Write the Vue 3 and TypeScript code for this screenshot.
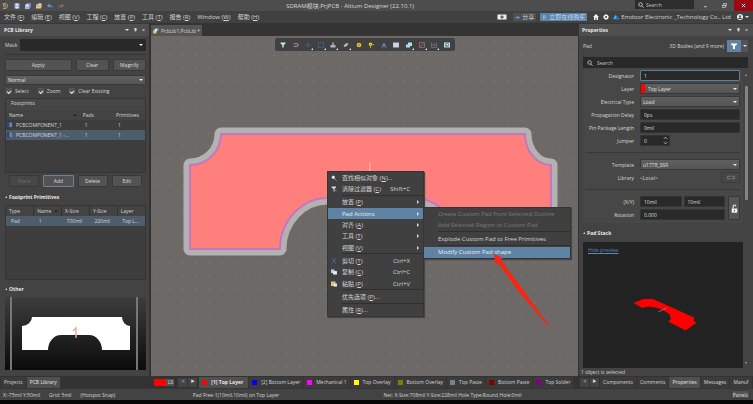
<script setup lang="ts">
import { ref } from 'vue'

interface Shape { d: string; fill?: string; stroke?: string; w?: number }
interface Tool { name: string; more?: boolean; shapes: Shape[] }
interface MenuItem { text?: string; key?: string; tail?: string; hint?: string; sub?: boolean; on?: boolean; off?: boolean; sep?: boolean; icon?: Shape[] }

const quick: Tool[] = [
  { name: 'Save', shapes: [{ d: 'M1 1h10v10H1z', fill: '#8e9fd6' }, { d: 'M3 1h6v4H3zM3 7h6v4H3z', fill: '#e8ecfa' }] },
  { name: 'Save all', shapes: [{ d: 'M3 0h9v9H3z', fill: '#6f80c0' }, { d: 'M0 3h9v9H0z', fill: '#a9b5e4' }, { d: 'M2 3h5v3H2z', fill: '#eef' }] },
  { name: 'Open', shapes: [{ d: 'M0 3h4l1-2h6v4H0z', fill: '#dfe6ec' }, { d: 'M0 11V5h9l3 0-2 6z', fill: '#e9c27c' }] },
  { name: 'Undo', shapes: [{ d: 'M0 5l5-4v3c4 0 6 2 7 6-2-2-4-3-7-3v3z', fill: '#5d9bdc' }] },
  { name: 'Redo', shapes: [{ d: 'M12 5L7 1v3C3 4 1 6 0 10c2-2 4-3 7-3v3z', fill: '#777' }] },
]

const tools: Tool[] = [
  { name: 'Filter', shapes: [{ d: 'M1 1h10v2L7.5 6v5h-3V6L1 3z', fill: '#c3e6f5' }] },
  { name: 'Snap', shapes: [{ d: 'M1 3h6a3 3 0 010 6H1', stroke: '#6d8fb5', w: 2 }, { d: 'M7 3a3 3 0 010 6', stroke: '#cf7474', w: 2 }, { d: 'M3 6h4', stroke: '#8a8a96', w: 1 }] },
  { name: 'Move', more: true, shapes: [{ d: 'M6 1v10M1 6h10', stroke: '#4d6496', w: 1.6 }] },
  { name: 'Select area', more: true, shapes: [{ d: 'M1 1h10v10H1z', stroke: '#4d6496', w: 1.4 }] },
  { name: 'Align', more: true, shapes: [{ d: 'M1 6h10v5H1z', fill: '#98bbe0' }, { d: 'M4 1h4v6H4z', fill: '#d48070' }] },
  { name: 'Body', more: true, shapes: [{ d: 'M1 7l6-5 4 1-3 5-5 2z', fill: '#aebbc0' }] },
  { name: 'Pad', shapes: [{ d: 'M6 3a3 3 0 100 6 3 3 0 000-6z', stroke: '#ecc320', w: 3.4 }] },
  { name: 'Via', shapes: [{ d: 'M5 2.5a2.2 2.2 0 100 4.4 2.2 2.2 0 000-4.400z', stroke: '#f0cb21', w: 2.6 }, { d: 'M5 7v5M7 5h5', stroke: '#d9bd32', w: 1.6 }] },
  { name: 'Text', shapes: [{ d: 'M2.500 11L6 2l3.500 9M3.500 8h5', stroke: '#5a92cd', w: 2 }] },
  { name: 'Table', shapes: [{ d: 'M0 1h12v10H0z', fill: '#c7c9df' }, { d: 'M2 4h8M2 8h8', stroke: '#e9e9f5', w: 1 }] },
  { name: 'Region', more: true, shapes: [{ d: 'M4 1h8v7H8v3H0V5h4z', fill: '#b2dcf0' }] },
  { name: 'Keepout', more: true, shapes: [{ d: 'M1 1h10v10H1z', stroke: '#a2788d', w: 1.3 }, { d: 'M3 9l6-6', stroke: '#a89a68', w: 1.3 }] },
  { name: 'Dimension', more: true, shapes: [{ d: 'M1 1v10h10V1', stroke: '#507ab0', w: 1.6 }, { d: 'M3 4h6M3 7h6', stroke: '#8b795a', w: 1.4 }] },
  { name: 'View', shapes: [{ d: 'M0 1h12v10H0z', fill: '#b4dff0' }, { d: 'M3 3h6v6H3z', fill: '#42545c' }, { d: 'M5 4h3v3H5z', fill: '#e8f6fb' }] },
]

const menus = [['文件', 'F'], ['编辑', 'E'], ['视图', 'V'], ['工程', 'C'], ['放置', 'P'], ['工具', 'T'], ['报告', 'R'], ['Window', 'W'], ['帮助', 'H']]

const context: MenuItem[] = [
  { text: '查找相似对象', key: 'N', tail: '...', icon: [{ d: 'M4.500 2a2.500 2.500 0 100 5 2.500 2.500 0 000-5z', fill: '#fff', stroke: '#dfeaf2', w: 1.5 }, { d: 'M7 7l4 4', stroke: '#d39a4a', w: 2 }] },
  { text: '清除过滤器', key: 'C', hint: 'Shift+C', icon: [{ d: 'M1 1h9v2L7 6v5H5V6L1 3z', fill: '#b9e0ef' }, { d: 'M7 7l4 4M11 7l-4 4', stroke: '#e06060', w: 1.4 }] },
  { sep: true },
  { text: '放置', key: 'P', sub: true },
  { text: 'Pad Actions', sub: true, on: true },
  { text: '对齐', key: 'A', sub: true },
  { text: '工具', key: 'T', sub: true },
  { text: '视图', key: 'V', sub: true },
  { sep: true },
  { text: '剪切', key: 'T', hint: 'Ctrl+X', icon: [{ d: 'M3 1l5 8M9 1L4 9M2 10h2M8 10h2', stroke: '#4674b8', w: 1.6 }] },
  { text: '复制', key: 'C', hint: 'Ctrl+C', icon: [{ d: 'M0 1h7v7H0z', fill: '#c5d2ee' }, { d: 'M4 4h8v7H4z', fill: '#e8eefb', stroke: '#8298c8', w: 0.6 }] },
  { text: '粘贴', key: 'P', hint: 'Ctrl+V', icon: [{ d: 'M0 1h9v9H0z', fill: '#e2c473' }, { d: 'M5 5h7v6H5z', fill: '#e8eefb', stroke: '#8298c8', w: 0.6 }] },
  { sep: true },
  { text: '优先选项', key: 'P', tail: '...' },
  { sep: true },
  { text: '属性', key: 'R', tail: '...' },
]

const submenu: MenuItem[] = [
  { text: 'Create Custom Pad from Selected Outline', off: true },
  { text: 'Add Selected Region to Custom Pad', off: true },
  { sep: true },
  { text: 'Explode Custom Pad to Free Primitives' },
  { sep: true },
  { text: 'Modify Custom Pad shape', on: true },
]

const layers = [
  { name: '[1] Top Layer', color: '#ff0000' },
  { name: '[2] Bottom Layer', color: '#0000ff' },
  { name: 'Mechanical 1', color: '#ff00ff' },
  { name: 'Top Overlay', color: '#ffff00' },
  { name: 'Bottom Overlay', color: '#808000' },
  { name: 'Top Paste', color: '#808080' },
  { name: 'Bottom Paste', color: '#800000' },
  { name: 'Top Solder', color: '#800080' },
]
const activeLayer = ref('[1] Top Layer')

const footprints = [
  { name: 'PCBCOMPONENT_1', pads: 1, prims: 1, on: false },
  { name: 'PCBCOMPONENT_1 -...', pads: 1, prims: 1, on: true },
]
const filters = ['Select', 'Zoom', 'Clear Existing']
const rightTabs = ['Components', 'Comments', 'Properties', 'Messages', 'Manuf']
const rightTab = ref('Properties')
const leftTab = ref('PCB Library')

const padPath = 'M70 98H374A26 31 0 0 0 400 129V213H309V212A48 51 0 0 0 262 162H176A48 51 0 0 0 129 212V213H39V129A31 31 0 0 0 70 98Z'
</script>

<template>
  <div class="app">
    <header class="titlebar">
      <div class="quick">
        <svg class="logo" viewBox="0 0 12 14"><path d="M3 2h3a5 5 0 010 10H2M2 5h3a2 2 0 010 4H3M3 2v6" fill="none" stroke="#c9ad72" stroke-width="1.700" /></svg>
        <button v-for="q in quick" :key="q.name" :aria-label="q.name">
          <svg class="ico" viewBox="0 0 12 12"><path v-for="(s, i) in q.shapes" :key="i" :d="s.d" :fill="s.fill ?? 'none'" :stroke="s.stroke" :stroke-width="s.w" /></svg>
        </button>
      </div>
      <h1>SDRAM模块.PrjPCB - Altium Designer (22.10.1)</h1>
      <div class="window-tools">
        <label class="top-search">
          <svg class="ico" viewBox="0 0 12 12"><path d="M5 1.500a3.500 3.500 0 100 7 3.500 3.500 0 000-7zM8 8l3 3.500" fill="none" stroke="#ddd" stroke-width="1.600" /></svg>
          <input type="text" placeholder="Search" aria-label="Search">
        </label>
        <button class="win" aria-label="Minimize"><svg class="ico" viewBox="0 0 12 12"><path d="M2 9h7" stroke="#ddd" stroke-width="2" /></svg></button>
        <button class="win" aria-label="Restore"><svg class="ico" viewBox="0 0 12 12"><path d="M4 4V1h7v6H8M1 5h7v6H1zM1 6h7" fill="none" stroke="#ddd" stroke-width="1.600" /></svg></button>
        <button class="win close" aria-label="Close"><svg class="ico" viewBox="0 0 12 12"><path d="M2 2l8 8M10 2l-8 8" stroke="#fff" stroke-width="2" /></svg></button>
      </div>
    </header>

    <nav class="menubar">
      <button v-for="m in menus" :key="m[0]">{{ m[0] }} (<u>{{ m[1] }}</u>)</button>
      <div class="account">
        <button class="present" aria-label="Present"><svg viewBox="0 0 20 12"><path d="M1 1h18v10H1z" fill="#eee" /><path d="M10 2.500v7M6.500 6h7" stroke="#333" stroke-width="2" /></svg></button>
        <button class="share"><svg class="ico" viewBox="0 0 12 12"><path d="M0 5h6V2l6 4-6 4V7H0z" fill="#5b9be0" /></svg>分享</button>
        <button class="buy"><svg class="ico" viewBox="0 0 12 12"><path d="M3 1v10M3 2h5v5H3M7 8l3 3" fill="none" stroke="#a9d0f5" stroke-width="1.500" /></svg>立即在线购买</button>
        <button aria-label="Home"><svg class="ico" viewBox="0 0 12 12"><path d="M6 0l6 6h-2v6H7V8H5v4H2V6H0z" fill="#eee" /></svg></button>
        <button aria-label="Settings"><svg class="ico" viewBox="0 0 12 12"><circle cx="6" cy="6" r="3.500" fill="none" stroke="#eee" stroke-width="3" /><path d="M6 0v12M0 6h12M2 2l8 8M10 2l-8 8" stroke="#eee" stroke-width="1.200" /><circle cx="6" cy="6" r="1.800" fill="#414141" /></svg></button>
        <a href="#company"><svg class="ico" viewBox="0 0 12 12"><path d="M0 10l5-8 7 8z" fill="#36c1ee" /><path d="M4 11l4-8 4 8z" fill="#2675d8" /></svg>Emdoor Electronic _Technology Co., Ltd</a>
        <button class="user" aria-label="User"><svg class="ico" viewBox="0 0 12 12"><circle cx="6" cy="6" r="6" fill="#eee" /><circle cx="6" cy="4.500" r="2" fill="#414141" /><path d="M2 10c1-4 7-4 8 0" fill="#414141" /></svg><i class="caret" /></button>
      </div>
    </nav>

    <main class="workspace">
      <aside class="side left">
        <div class="panel-head"><h2>PCB Library</h2><span class="head-icons"><i class="caret" /><svg viewBox="0 0 6 8"><path d="M1 0h4v4h1v1H0V4h1zM2.500 5h1v3h-1z" fill="#ddd" /></svg><svg viewBox="0 0 8 8"><path d="M1 1l6 6M7 1L1 7" stroke="#ddd" stroke-width="1.800" /></svg></span></div>
        <div class="left-body">
          <div class="mask"><label for="mask">Mask</label><span class="select dark"><select id="mask"><option /></select></span></div>
          <hr>
          <div class="actions"><button class="btn">Apply</button><button class="btn">Clear</button><button class="btn">Magnify</button></div>
          <span class="select mode"><select aria-label="Mode"><option>Normal</option></select></span>
          <div class="checks"><label v-for="f in filters" :key="f"><input type="checkbox" checked>{{ f }}</label></div>
          <section class="box footprints">
            <h3>Footprints</h3>
            <table>
              <thead><tr><th>Name<i class="sort" /></th><th>Pads</th><th>Primitives</th></tr></thead>
              <tbody>
                <tr v-for="f in footprints" :key="f.name" :class="{ on: f.on }">
                  <td><svg class="chip" viewBox="0 0 10 12"><path d="M0 1l6-1v12H0z" fill="#34466b" /><path d="M5 1h5v9H5z" fill="#6c86b6" /></svg>{{ f.name }}</td><td>{{ f.pads }}</td><td>{{ f.prims }}</td>
                </tr>
              </tbody>
            </table>
          </section>
          <div class="edits"><button class="btn" disabled>Place</button><button class="btn focus">Add</button><button class="btn">Delete</button><button class="btn">Edit</button></div>
          <h3 class="section"><i class="fold" />Footprint Primitives</h3>
          <section class="box primitives">
            <table>
              <thead><tr><th>Type</th><th>Name<i class="sort" /></th><th>X-Size</th><th>Y-Size</th><th>Layer</th></tr></thead>
              <tbody><tr class="on"><td>Pad</td><td>1</td><td>700mil</td><td>220mil</td><td>Top L...</td></tr></tbody>
            </table>
          </section>
          <h3 class="section"><i class="fold" />Other</h3>
          <div class="thumb">
            <svg viewBox="0 0 141 73" preserveAspectRatio="none">
              <path d="M6 0v73M132 0v73" stroke="#777" stroke-width="2" />
              <path d="M27 20H117A8 9 0 0 0 125 29V53H97A13 15 0 0 0 84 38H56A13 15 0 0 0 43 53H17V29A10 9 0 0 0 27 20Z" fill="#fff" />
              <path d="M68 34l3-3v10" fill="none" stroke="#f5a3a0" stroke-width="1.400" />
            </svg>
          </div>
        </div>
        <div class="tabs"><button v-for="t in ['Projects', 'PCB Library']" :key="t" :class="{ active: leftTab === t }" @click="leftTab = t">{{ t }}</button></div>
      </aside>

      <section class="editor">
        <div class="doc-tabs"><button><svg class="ico" viewBox="0 0 12 12"><path d="M5 0h6v6H5z" fill="#6c9cc5" /><path d="M0 5h7v6H0z" fill="#d8c65c" /><path d="M3 2h5v5H3z" fill="#e5e9dd" /></svg>PcbLib1.PcbLib *</button></div>
        <div class="canvas">
          <svg class="drawing" width="427" height="340" viewBox="0 0 427 340">
            <path :d="padPath" fill="#b4b2b1" stroke="#b4b2b1" stroke-width="13" stroke-linejoin="round" />
            <path :d="padPath" fill="#ff7f7d" stroke="#c078c0" stroke-width="2" />
            <path d="M219 126v14" stroke="#ffc2c0" stroke-width="1" />
          </svg>
          <div class="toolbar">
            <button v-for="t in tools" :key="t.name" :aria-label="t.name" :class="{ more: t.more }">
              <svg class="ico" viewBox="0 0 12 12"><path v-for="(s, i) in t.shapes" :key="i" :d="s.d" :fill="s.fill ?? 'none'" :stroke="s.stroke" :stroke-width="s.w" /></svg>
            </button>
          </div>
          <div class="popup context" role="menu">
            <template v-for="(m, i) in context" :key="i">
              <hr v-if="m.sep">
              <button v-else role="menuitem" :class="{ on: m.on }">
                <svg v-if="m.icon" class="ico mi" viewBox="0 0 12 12"><path v-for="(s, j) in m.icon" :key="j" :d="s.d" :fill="s.fill ?? 'none'" :stroke="s.stroke" :stroke-width="s.w" /></svg>
                <span>{{ m.text }}<template v-if="m.key"> (<u>{{ m.key }}</u>){{ m.tail }}</template></span>
                <kbd v-if="m.hint">{{ m.hint }}</kbd><i v-if="m.sub" class="arrow" />
              </button>
            </template>
          </div>
          <div class="popup sub" role="menu">
            <template v-for="(m, i) in submenu" :key="i">
              <hr v-if="m.sep">
              <button v-else role="menuitem" :class="{ on: m.on }" :disabled="m.off">{{ m.text }}</button>
            </template>
          </div>
          <svg class="drawing pointer" width="427" height="340" viewBox="0 0 427 340">
            <path d="M343 218L352 222L350 224L373 255L399 291L398 291L368 256L347 227L344 228Z" fill="#fb2412" />
          </svg>
        </div>
        <div class="tabs layers">
          <button class="set"><i />LS</button>
          <span class="pager"><button aria-label="Previous layer" class="dim">◀</button><button aria-label="Next layer">▶</button></span>
          <button v-for="l in layers" :key="l.name" class="layer" :class="{ active: activeLayer === l.name }" @click="activeLayer = l.name"><i :style="{ background: l.color }" />{{ l.name }}</button>
        </div>
      </section>

      <aside class="side right">
        <div class="panel-head"><h2>Properties</h2><span class="head-icons"><i class="caret" /><svg viewBox="0 0 6 8"><path d="M1 0h4v4h1v1H0V4h1zM2.500 5h1v3h-1z" fill="#ddd" /></svg><svg viewBox="0 0 8 8"><path d="M1 1l6 6M7 1L1 7" stroke="#ddd" stroke-width="1.800" /></svg></span></div>
        <div class="right-body">
          <div class="scope"><span>Pad</span><span class="what">3D Bodies (and 9 more)</span><button class="filter" aria-label="Filter"><svg class="ico" viewBox="0 0 12 12"><path d="M0 1h12v2L8 6v6H4V6L0 3z" fill="#fff" /></svg></button><button class="drop" aria-label="Filter options"><i class="caret" /></button></div>
          <label class="search"><svg class="ico" viewBox="0 0 12 12"><path d="M5 1.500a3.500 3.500 0 100 7 3.500 3.500 0 000-7zM8 8l3 3.500" fill="none" stroke="#ddd" stroke-width="1.500" /></svg><input type="text" placeholder="Search" aria-label="Search properties"></label>
          <div class="scroller">
            <div class="props">
              <form class="form" @submit.prevent>
                <div class="row"><label for="des">Designator</label><input id="des" class="focus" type="text" value="1"></div>
                <div class="row"><label for="lay">Layer</label><span class="select red"><select id="lay"><option>Top Layer</option></select></span></div>
                <div class="row"><label for="ele">Electrical Type</label><span class="select"><select id="ele"><option>Load</option></select></span></div>
                <div class="row"><label for="del">Propagation Delay</label><input id="del" type="text" value="0ps"></div>
                <div class="row"><label for="len">Pin Package Length</label><input id="len" type="text" value="0mil"></div>
                <div class="row"><label for="jum">Jumper</label><span class="spin"><input id="jum" type="text" value="0"><svg viewBox="0 0 6 12"><path d="M1 4l2-2 2 2M1 8l2 2 2-2" fill="none" stroke="#ccc" /></svg></span></div>
                <hr>
                <div class="row"><label for="tpl">Template</label><span class="select"><select id="tpl"><option>u1778_SS9</option></select></span></div>
                <div class="row"><span class="lab">Library</span><span class="local">&lt;Local&gt;<button type="button" class="link" aria-label="Link"><svg viewBox="0 0 16 8"><path d="M7 2H4a2 2 0 000 4h3M9 2h3a2 2 0 010 4H9" fill="none" stroke="#8a8a8a" stroke-width="1.400" /></svg></button></span></div>
                <hr>
                <div class="position">
                  <div class="row"><label for="px">(X/Y)</label><span class="pair"><input id="px" type="text" value="10mil"><input type="text" value="10mil" aria-label="Y"></span></div>
                  <div class="row"><label for="rot">Rotation</label><input id="rot" type="text" value="0.000"></div>
                  <button type="button" class="lock" aria-label="Lock"><svg viewBox="0 0 10 12"><path d="M1 6h8v6H1z" fill="#f2f2f2" /><path d="M3 6V3a2 2 0 014 0" fill="none" stroke="#f2f2f2" stroke-width="1.500" /><path d="M5 8v2" stroke="#444" stroke-width="1.500" /></svg></button>
                </div>
              </form>
              <h3 class="section"><i class="fold" />Pad Stack</h3>
              <div class="preview">
                <a href="#preview">Hide preview</a>
                <svg viewBox="0 0 160 128">
                  <path d="M50 62L60 58H70L112 77L111 80L114 82L103 90L85.500 81L88 78L87 74Q80 68 72 66.500Q66 65 59 67Z" fill="#fa0000" />
                  <path d="M75 71l9-4" stroke="#aaa" stroke-width="0.600" />
                </svg>
              </div>
            </div>
            <div class="scrollbar"><i class="up" /><i class="grip" /><i class="down" /></div>
          </div>
          <p class="count">1 object is selected</p>
        </div>
        <div class="tabs">
          <span class="pager"><button aria-label="Previous panel" class="dim">◀</button><button aria-label="Next panel">▶</button></span>
          <button v-for="t in rightTabs" :key="t" :class="{ active: rightTab === t }" @click="rightTab = t">{{ t }}</button>
        </div>
      </aside>
    </main>

    <footer class="status">
      <div class="coords"><span>X:-75mil Y:50mil</span><span>Grid: 5mil</span><span>(Hotspot Snap)</span></div>
      <span class="hover">Pad Free-1(10mil,10mil) on Top Layer</span>
      <span class="net">Net: X-Size:708mil Y-Size:228mil Hole Type:Round Hole:0mil</span>
      <button class="btn">Panels</button>
    </footer>
  </div>
</template>

<style>
body { margin: 0; background: #050505; }
</style>

<style scoped>
* { box-sizing: border-box; }
.app { display: flex; flex-direction: column; height: 100vh; padding-bottom: 4px; overflow: hidden; background: #050505; color: #d6d6d6; font: 5px/8px "Open Sans", "Noto Sans CJK SC", sans-serif; white-space: nowrap; }
button, input, select, kbd { font: inherit; color: inherit; }
button { display: flex; align-items: center; justify-content: center; margin: 0; padding: 0; border: 0; background: none; }
input, select { min-width: 0; margin: 0; padding: 0; border: 0; outline: 0; background: none; }
input::placeholder { color: #c4c4c4; opacity: 1; }
h1, h2, h3, p { margin: 0; font-size: inherit; font-weight: 400; }
a { color: inherit; text-decoration: none; }
hr { margin: 0; border: 0; }
svg { display: block; flex: none; }
.ico { width: 6px; height: 6px; }
.caret { width: 0; height: 0; border: 2px solid transparent; border-top: 2px solid #e0e0e0; border-bottom: 0; }

.titlebar { display: grid; grid-template-columns: 38% 1fr auto; flex: 0 0 11px; align-items: center; background: #4d4d4d; }
.titlebar h1 { font-size: 6px; color: #d8d8d8; }
.quick { display: flex; align-items: center; gap: 5px; padding-left: 2px; }
.logo { width: 6px; height: 8px; margin-right: 1px; }
.window-tools { display: flex; height: 11px; }
.top-search { display: flex; align-items: center; gap: 2px; width: 59px; height: 9px; margin-right: 2px; padding-left: 3px; background: #2d2d2d; }
.top-search input { width: 40px; }
.win { width: 19px; }
.win .ico { width: 5px; height: 5px; }
.close { background: #9d0712; }

.menubar { display: flex; align-items: center; flex: 0 0 12px; gap: 7px; padding: 0 4px; background: #414141; font-size: 6px; color: #d4d4d4; }
.account { display: flex; align-items: center; gap: 4px; margin-left: auto; }
.account a { display: flex; align-items: center; gap: 2px; }
.present { margin-right: 2px; }
.present svg { width: 10px; height: 6px; }
.share, .buy { gap: 2px; height: 8px; padding: 0 2px; background: #505050; }
.share .ico, .buy .ico { width: 5px; height: 5px; }
.buy { background: #5b82a8; margin-right: 2px; color: #c6dcf0; }
.user { gap: 2px; margin-left: 2px; }

.workspace { display: grid; grid-template-columns: minmax(151px, 20%) minmax(0, 1fr) minmax(175px, 23%); flex: 1; min-height: 0; }
.side, .editor { display: flex; flex-direction: column; min-width: 0; min-height: 0; background: #343434; }
.side { background: #434343; }
.left { border-right: 2px solid #323232; }
.right { border-left: 1px solid #323232; }
.panel-head { display: flex; align-items: center; justify-content: space-between; flex: 0 0 13px; padding: 0 4px; border-top: 1px solid #383838; background: #4f4f4f; }
.right .panel-head { padding: 0 5px 0 3px; }
h2 { font-weight: 700; color: #e8e8e8; }
.head-icons { display: flex; align-items: center; gap: 5px; }
.head-icons svg { width: 3px; height: 4px; }

.btn { height: 12px; border: 1px solid #393939; border-radius: 1px; background: #535353; color: #dedede; }
.btn:disabled { background: #474747; color: #6e6e6e; }
.btn.focus { border-color: #6b8398; }
.select { position: relative; display: flex; height: 10px; border: 1px solid #383838; background: linear-gradient(#606060, #555); }
.select select { flex: 1; appearance: none; padding-left: 2px; color: #e0e0e0; }
.select::after { content: ""; position: absolute; right: 2px; top: 3px; border: 2px solid transparent; border-top: 2px solid #eee; border-bottom: 0; pointer-events: none; }

.left-body { display: flex; flex-direction: column; flex: 1; min-height: 0; padding: 3px 3px 0 5px; }
.mask { display: grid; grid-template-columns: 15px 1fr; align-items: center; }
.dark { height: 12px; background: #292929; border-color: #292929; border-radius: 1px; }
.dark::after { top: 4px; }
.left-body > hr { height: 1px; margin: 3px 0 4px; background: #333; }
.actions { display: grid; grid-template-columns: 2fr 1fr 1fr; gap: 4px; }
.mode { margin-top: 4px; }
.checks { display: flex; gap: 9px; height: 13px; align-items: center; padding-left: 1px; }
.checks label { display: flex; align-items: center; gap: 3px; }
.checks input { display: grid; place-items: center; width: 6px; height: 6px; appearance: none; border: 1px solid #555; background: #525252; }
.checks input:checked::after { content: ""; width: 3px; height: 2px; border-left: 1px solid #eee; border-bottom: 1px solid #eee; transform: rotate(-45deg); }
.box { border: 1px solid #353535; background: #3d3d3d; }
.footprints { flex: 0 0 75px; }
.footprints h3 { height: 11px; padding-left: 5px; line-height: 9px; background: #464646; }
table { width: 100%; border-collapse: collapse; table-layout: fixed; }
th, td { height: 10px; padding: 0 3px; text-align: left; font-weight: 400; overflow: hidden; }
th { background: #434343; }
tr.on { background: #4d5d6c; }
.footprints th:first-child { width: 53%; }
.footprints th:nth-child(2) { width: 24%; }
.footprints td + td { padding-left: 5px; }
.footprints td:first-child { padding-left: 1px; white-space: nowrap; }
.chip { display: inline-block; width: 5px; height: 6px; margin-right: 4px; vertical-align: middle; }
.sort { float: right; margin-top: 3px; border: 2px solid transparent; border-bottom: 2px solid #222; border-top: 0; }
.edits { display: grid; grid-template-columns: repeat(4, 1fr); gap: 4px; padding: 2px 4px; }
.section { display: flex; align-items: center; gap: 2px; height: 17px; font-weight: 700; color: #e8e8e8; }
.fold { width: 0; height: 0; border-left: 2px solid transparent; border-bottom: 2px solid #ddd; }
.primitives { flex: 1 1 76px; min-height: 30px; }
.primitives th + th { border-left: 1px solid #333; }
.primitives td { padding-left: 5px; }
.thumb { flex: 0 0 73px; margin-bottom: 6px; background: linear-gradient(#3d3d3d, #0b0b0b); }
.thumb svg { width: 100%; height: 100%; }

.tabs { display: flex; align-items: center; flex: 0 0 12px; gap: 1px; overflow: hidden; padding-left: 1px; background: #333; }
.tabs > button { flex: none; height: 11px; padding: 0 3px; background: #3b3b3b; }
.tabs > button.active { background: #505050; color: #e6e6e6; }
.pager { display: flex; flex: none; gap: 1px; }
.pager button { width: 9px; height: 9px; background: #444; font-size: 4px; }
.pager .dim { color: #777; }

.doc-tabs { display: flex; align-items: flex-end; flex: 0 0 13px; }
.doc-tabs button { gap: 2px; height: 11px; padding: 0 2px; background: #555; }
.canvas { position: relative; flex: 1; overflow: hidden; background: radial-gradient(circle at 6px 6px, #74716e 1px, transparent 1px) 0 0 / 13px 13px #6c6966; }
.drawing { position: absolute; left: 0; top: 0; }
.pointer { pointer-events: none; }
.toolbar { position: absolute; left: 124px; top: 2px; display: flex; justify-content: space-between; width: 180px; height: 13px; padding: 0 3px; border-radius: 2px; background: #414141; }
.toolbar button { position: relative; width: 10px; }
.toolbar .more::after { content: ""; position: absolute; right: 0; bottom: 1px; border-left: 2px solid transparent; border-bottom: 2px solid #eee; }
.popup { position: absolute; display: flex; flex-direction: column; padding: 1px; background: #404040; font-size: 6px; color: #d6d6d6; box-shadow: 0 0 0 1px #353535 inset, 1px 1px 1px #4a4846; }
.popup hr { flex: 0 0 2px; margin-left: 14px; border-top: 1px solid #2f2f2f; }
.popup button { position: relative; flex: 1; min-height: 0; justify-content: flex-start; padding-left: 14px; }
.popup .on { background: #5f83a5; color: #eee; }
.popup button:disabled { color: #7c7c7c; }
.context { left: 176px; top: 135px; width: 97px; height: 146px; }
.sub { left: 272px; top: 171px; width: 148px; height: 52px; }
.mi { position: absolute; left: 3px; }
.popup kbd { margin-left: auto; margin-right: 13px; }
.arrow { margin-left: auto; margin-right: 4px; border: 2px solid transparent; border-left: 2px solid #ddd; border-right: 0; }
.layers { padding-left: 3px; }
.layers .pager { margin: 0 1px 0 3px; }
.layers .layer { gap: 4px; padding: 0 3px; }
.layers .layer i { width: 5px; height: 5px; }
.layers .layer.active { padding-right: 5px; font-weight: 700; }
.layers .set { gap: 2px; height: 7px; padding: 0 1px 0 0; background: #555; }
.set i { width: 12px; height: 7px; background: #f00; }

.right-body { display: flex; flex-direction: column; flex: 1; min-height: 0; padding: 3px 5px 0 4px; }
.scope { display: flex; align-items: center; height: 14px; }
.what { margin-left: auto; margin-right: 3px; }
.filter { width: 14px; height: 12px; background: #5f83a5; }
.drop { width: 7px; height: 12px; background: #535353; }
.search { display: flex; align-items: center; flex: none; gap: 4px; height: 11px; margin: 4px 0 1px; padding-left: 4px; background: #292929; }
.scroller { display: grid; grid-template-columns: 1fr 5px; flex: 1; min-height: 0; }
.props { display: flex; flex-direction: column; min-width: 0; min-height: 0; }
.form { padding-right: 3px; padding-bottom: 2px; background: #474747; }
.form hr { height: 1px; margin: 5px 0 5px 3px; background: #383838; }
.row { display: grid; grid-template-columns: 51px minmax(0, 1fr); align-items: center; gap: 6px; height: 13px; }
.row label, .lab { text-align: right; }
.form input { width: 100%; height: 11px; padding: 0 3px; border: 1px solid #333; border-radius: 1px; background: #292929; color: #dedede; }
.form input.focus { border-color: #5f7d99; }
.form .select { height: 11px; border-radius: 1px; }
.form .select::after { top: 4px; }
.red select { border-left: 4px solid #f00; padding-left: 3px; }
.spin { position: relative; width: 30px; }
.spin svg { position: absolute; right: 2px; top: 0; width: 5px; height: 11px; }
.local { display: flex; align-items: center; justify-content: space-between; }
.link { width: 19px; height: 11px; border: 1px solid #3b3b3b; }
.link svg { width: 10px; height: 5px; }
.position { display: grid; grid-template-columns: minmax(0, 1fr) 12px; column-gap: 3px; }
.pair { display: grid; grid-template-columns: 1fr 1fr; gap: 2px; }
.lock { grid-column: 2; grid-row: 1 / 3; margin: 1px 0; border: 1px solid #383838; background: #555; }
.lock svg { width: 7px; height: 9px; }
.props .section { flex: 0 0 19px; }
.preview { position: relative; flex: 1; min-height: 0; background: #222; border-radius: 1px; }
.preview a { position: absolute; left: 5px; top: 4px; color: #5b8ab5; text-decoration: underline; }
.preview svg { width: 100%; height: 100%; }
.scrollbar { display: flex; flex-direction: column; align-items: center; justify-content: space-between; padding: 5px 0 4px 1px; }
.grip { width: 3px; flex: 0 0 114px; margin: 10px 0 auto; background: #858585; border-radius: 1px; }
.up, .down { border: 1px solid transparent; border-bottom: 2px solid #aaa; border-top: 0; }
.down { border-bottom: 0; border-top: 2px solid #aaa; }
.count { flex: 0 0 8px; margin-left: -2px; }

.status { display: grid; grid-template-columns: 25% 25% 1fr auto; align-items: center; flex: 0 0 12px; padding: 0 3px; border-top: 1px solid #363636; background: #434343; }
.coords { display: flex; gap: 9px; }
.hover { padding-left: 3px; }
.net { padding-left: 7px; }
.status .btn { height: 9px; padding: 0 1px; }
</style>
